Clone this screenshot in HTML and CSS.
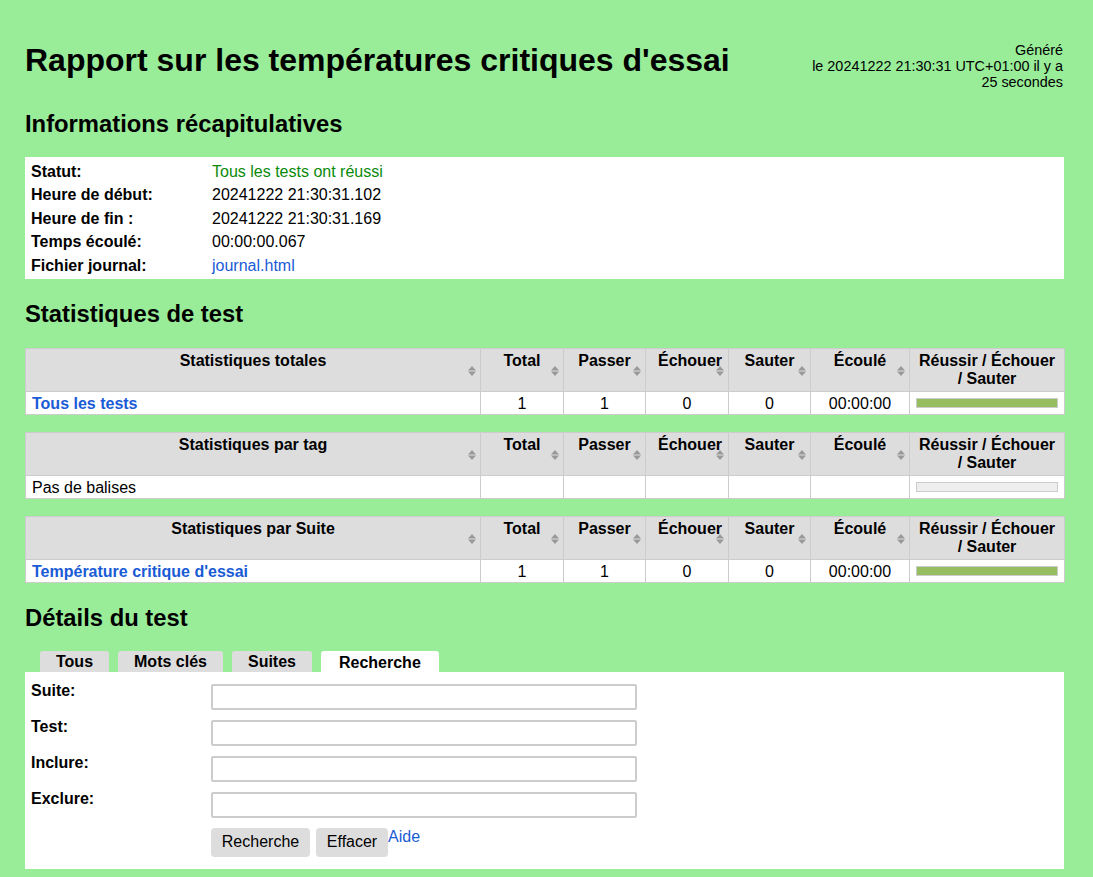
FILE: index.html
```html
<!DOCTYPE html>
<html lang="fr">
<head>
<meta charset="utf-8">
<title>Rapport sur les températures critiques d'essai</title>
<link rel="stylesheet" href="styles.css">
</head>
<body>
<div class="header">
  <h1>Rapport sur les températures critiques d'essai</h1>
  <div class="generated">Généré<br>le 20241222 21:30:31 UTC+01:00 il y a<br>25 secondes</div>
</div>

<h2>Informations récapitulatives</h2>
<table class="details">
  <tr><th>Statut:</th><td class="pass">Tous les tests ont réussi</td></tr>
  <tr><th>Heure de début:</th><td>20241222 21:30:31.102</td></tr>
  <tr><th>Heure de fin :</th><td>20241222 21:30:31.169</td></tr>
  <tr><th>Temps écoulé:</th><td>00:00:00.067</td></tr>
  <tr><th>Fichier journal:</th><td><a href="#">journal.html</a></td></tr>
</table>

<h2>Statistiques de test</h2>

<table class="stats">
  <colgroup><col class="c-name"><col class="c-num"><col class="c-num2"><col class="c-num"><col class="c-num2"><col class="c-el"><col class="c-bar"></colgroup>
  <thead><tr>
    <th class="name">Statistiques totales<svg class="sort" viewBox="0 0 8 12"><path d="M4 1L8 5.5H0Z M4 11L8 6.5H0Z"/></svg></th>
    <th>Total<svg class="sort" viewBox="0 0 8 12"><path d="M4 1L8 5.5H0Z M4 11L8 6.5H0Z"/></svg></th>
    <th>Passer<svg class="sort" viewBox="0 0 8 12"><path d="M4 1L8 5.5H0Z M4 11L8 6.5H0Z"/></svg></th>
    <th>Échouer<svg class="sort" viewBox="0 0 8 12"><path d="M4 1L8 5.5H0Z M4 11L8 6.5H0Z"/></svg></th>
    <th>Sauter<svg class="sort" viewBox="0 0 8 12"><path d="M4 1L8 5.5H0Z M4 11L8 6.5H0Z"/></svg></th>
    <th>Écoulé<svg class="sort" viewBox="0 0 8 12"><path d="M4 1L8 5.5H0Z M4 11L8 6.5H0Z"/></svg></th>
    <th class="graph">Réussir / Échouer / Sauter</th>
  </tr></thead>
  <tbody><tr>
    <td class="name"><a href="#" class="strong">Tous les tests</a></td>
    <td>1</td><td>1</td><td>0</td><td>0</td><td>00:00:00</td>
    <td class="bar-cell"><div class="bar pass-bar"></div></td>
  </tr></tbody>
</table>

<table class="stats">
  <colgroup><col class="c-name"><col class="c-num"><col class="c-num2"><col class="c-num"><col class="c-num2"><col class="c-el"><col class="c-bar"></colgroup>
  <thead><tr>
    <th class="name">Statistiques par tag<svg class="sort" viewBox="0 0 8 12"><path d="M4 1L8 5.5H0Z M4 11L8 6.5H0Z"/></svg></th>
    <th>Total<svg class="sort" viewBox="0 0 8 12"><path d="M4 1L8 5.5H0Z M4 11L8 6.5H0Z"/></svg></th>
    <th>Passer<svg class="sort" viewBox="0 0 8 12"><path d="M4 1L8 5.5H0Z M4 11L8 6.5H0Z"/></svg></th>
    <th>Échouer<svg class="sort" viewBox="0 0 8 12"><path d="M4 1L8 5.5H0Z M4 11L8 6.5H0Z"/></svg></th>
    <th>Sauter<svg class="sort" viewBox="0 0 8 12"><path d="M4 1L8 5.5H0Z M4 11L8 6.5H0Z"/></svg></th>
    <th>Écoulé<svg class="sort" viewBox="0 0 8 12"><path d="M4 1L8 5.5H0Z M4 11L8 6.5H0Z"/></svg></th>
    <th class="graph">Réussir / Échouer / Sauter</th>
  </tr></thead>
  <tbody><tr>
    <td class="name plain">Pas de balises</td>
    <td></td><td></td><td></td><td></td><td></td>
    <td class="bar-cell"><div class="bar empty-bar"></div></td>
  </tr></tbody>
</table>

<table class="stats">
  <colgroup><col class="c-name"><col class="c-num"><col class="c-num2"><col class="c-num"><col class="c-num2"><col class="c-el"><col class="c-bar"></colgroup>
  <thead><tr>
    <th class="name">Statistiques par Suite<svg class="sort" viewBox="0 0 8 12"><path d="M4 1L8 5.5H0Z M4 11L8 6.5H0Z"/></svg></th>
    <th>Total<svg class="sort" viewBox="0 0 8 12"><path d="M4 1L8 5.5H0Z M4 11L8 6.5H0Z"/></svg></th>
    <th>Passer<svg class="sort" viewBox="0 0 8 12"><path d="M4 1L8 5.5H0Z M4 11L8 6.5H0Z"/></svg></th>
    <th>Échouer<svg class="sort" viewBox="0 0 8 12"><path d="M4 1L8 5.5H0Z M4 11L8 6.5H0Z"/></svg></th>
    <th>Sauter<svg class="sort" viewBox="0 0 8 12"><path d="M4 1L8 5.5H0Z M4 11L8 6.5H0Z"/></svg></th>
    <th>Écoulé<svg class="sort" viewBox="0 0 8 12"><path d="M4 1L8 5.5H0Z M4 11L8 6.5H0Z"/></svg></th>
    <th class="graph">Réussir / Échouer / Sauter</th>
  </tr></thead>
  <tbody><tr>
    <td class="name"><a href="#" class="strong">Température critique d'essai</a></td>
    <td>1</td><td>1</td><td>0</td><td>0</td><td>00:00:00</td>
    <td class="bar-cell"><div class="bar pass-bar"></div></td>
  </tr></tbody>
</table>

<h2>Détails du test</h2>
<div class="tabs">
  <span class="tab">Tous</span>
  <span class="tab">Mots clés</span>
  <span class="tab">Suites</span>
  <span class="tab selected">Recherche</span>
</div>
<div class="panel">
  <div class="form-row"><label>Suite:</label><input type="text"></div>
  <div class="form-row"><label>Test:</label><input type="text"></div>
  <div class="form-row"><label>Inclure:</label><input type="text"></div>
  <div class="form-row"><label>Exclure:</label><input type="text"></div>
  <div class="form-row buttons">
    <span></span>
    <div class="btn-group">
      <button type="button" class="btn-search">Recherche</button>
      <button type="button" class="btn-clear">Effacer</button>
      <a href="#">Aide</a>
    </div>
  </div>
</div>
</body>
</html>
```

FILE: styles.css
```css
html, body {
  margin: 0;
  background: #99ed99;
}
body {
  padding: 0 29px 0 25px;
  font-family: "Liberation Sans", Arial, Helvetica, sans-serif;
  font-size: 16px;
  color: #000;
}
a {
  color: #1a5bd6;
  text-decoration: none;
}
a.strong {
  font-weight: bold;
}

.header {
  display: flex;
  justify-content: space-between;
  align-items: flex-start;
  padding-top: 42px;
  height: 48px;
}
h1 {
  margin: 0;
  font-size: 32px;
  line-height: 36px;
  font-weight: bold;
}
.generated {
  font-size: 14.4px;
  line-height: 16px;
  text-align: right;
  white-space: nowrap;
  margin-right: 1px;
}
h2 {
  margin: 22px 0 21px 0;
  font-size: 23.8px;
  line-height: 24px;
  font-weight: bold;
}
.details + h2, .stats + h2 {
  margin-top: 23px;
  margin-bottom: 22px;
}

.details {
  width: 100%;
  background: #fff;
  border-collapse: collapse;
  border-spacing: 0;
  border-top: 3px solid #fff;
  border-bottom: 1px solid #fff;
}
.details th {
  width: 181px;
  text-align: left;
  padding: 0 0 0 6px;
  height: 23.5px;
  font-weight: bold;
}
.details td {
  padding: 0;
  height: 23.5px;
}
.pass {
  color: #098a09;
}

.stats {
  width: 100%;
  border-collapse: collapse;
  table-layout: fixed;
  background: #fff;
  margin-bottom: 17px;
}
.stats:last-of-type {
  margin-bottom: 0;
}
.c-name { width: 455px; }
.c-num { width: 83px; }
.c-num2 { width: 82px; }
.c-el { width: 99px; }
.c-bar { width: 155px; }
.stats th {
  position: relative;
  background: #ddd;
  border: 1px solid #ccc;
  vertical-align: top;
  text-align: center;
  font-weight: bold;
  line-height: 18px;
  padding: 3px 12px 3px 12px;
  height: 36px;
}
.stats th.graph {
  padding: 3px 6px 3px 6px;
}
.stats td {
  border: 1px solid #ccc;
  text-align: center;
  height: 21px;
  padding: 1px 6px 0 6px;
  line-height: 21px;
}
.stats td.name {
  text-align: left;
}
.sort {
  position: absolute;
  right: 4px;
  top: 50%;
  width: 8px;
  height: 12px;
  margin-top: -5px;
  fill: #999;
}
.bar-cell {
  vertical-align: middle;
}
.bar {
  height: 8px;
  border: 1px solid #ccc;
}
.pass-bar {
  background: #97bd61;
}
.empty-bar {
  background: #eee;
}

.tabs {
  display: flex;
  gap: 9px;
  padding-left: 15px;
  height: 21px;
  margin-top: -1px;
  align-items: flex-end;
}
.tab {
  background: #ddd;
  font-weight: bold;
  padding: 0 16px;
  line-height: 21px;
  height: 21px;
  border-radius: 3px 3px 0 0;
}
.tab.selected {
  background: #fff;
  line-height: 23px;
  padding: 0 18px;
}
.panel {
  background: #fff;
  padding: 10px 6px 12px 6px;
}
.form-row {
  display: grid;
  grid-template-columns: 180px 1fr;
  height: 36px;
  align-items: start;
}
.form-row label {
  font-weight: bold;
  line-height: 18px;
}
.form-row input {
  margin-top: 2px;
  width: 426px;
  height: 26px;
  box-sizing: border-box;
  border: 2px solid #ccc;
  border-radius: 2px;
  font-family: inherit;
  font-size: 16px;
  padding: 0 4px;
  background: #fff;
}
.form-row.buttons {
  height: auto;
}
.btn-group {
  display: flex;
  align-items: flex-start;
  gap: 6px;
  padding-top: 2px;
}
.btn-group button {
  background: #ddd;
  border: none;
  border-radius: 4px;
  font-family: inherit;
  font-size: 16px;
  color: #000;
  height: 29px;
  padding: 0;
}
.btn-search { width: 99px; }
.btn-clear { width: 72px; }
.btn-group a {
  margin-left: -6px;
  line-height: 18px;
}
```
